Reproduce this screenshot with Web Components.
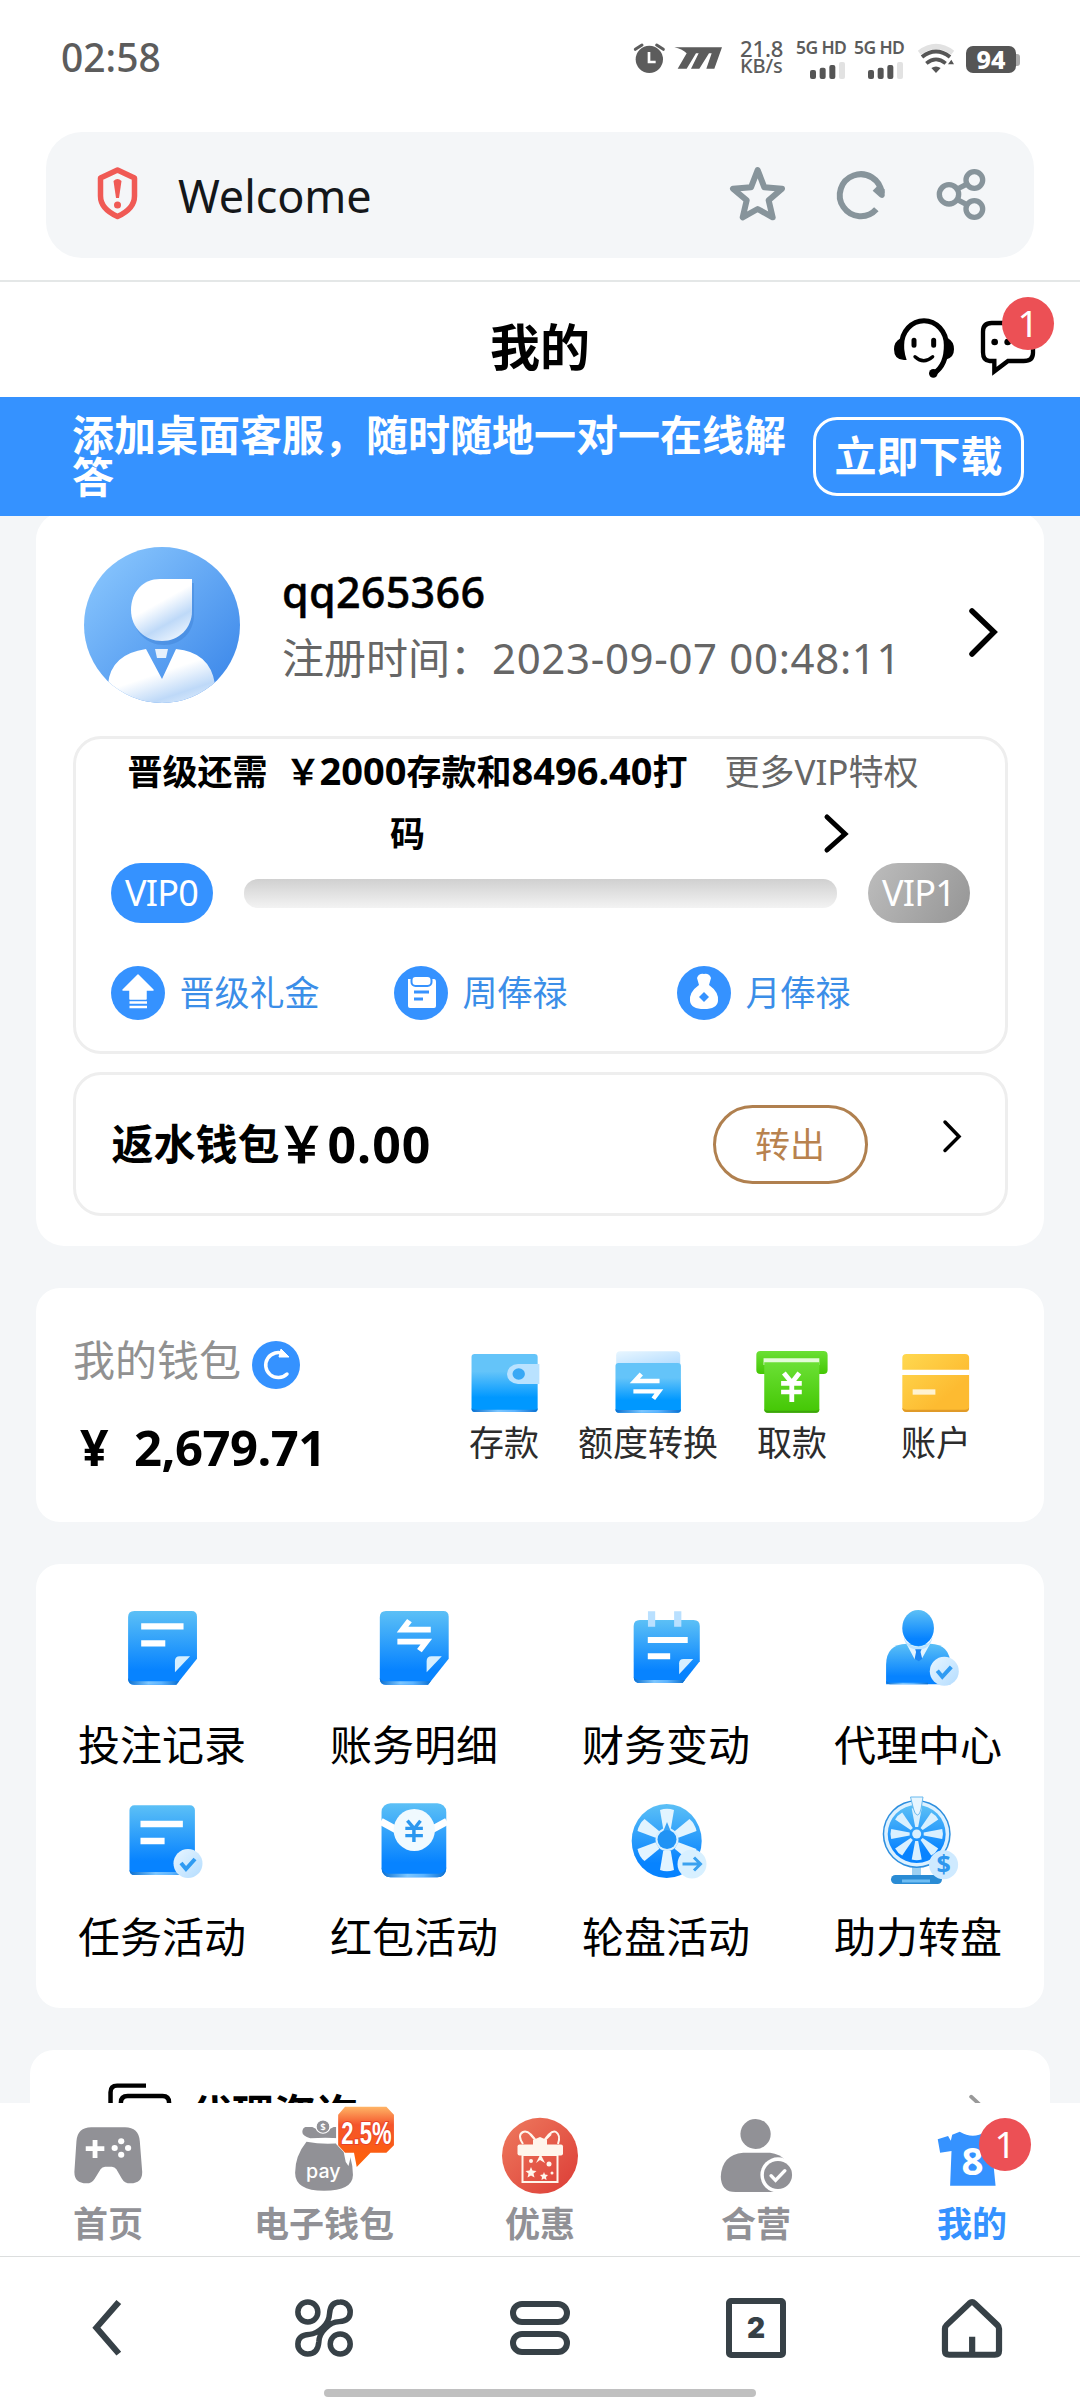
<!DOCTYPE html>
<html lang="zh-CN">
<head>
<meta charset="utf-8">
<title>Welcome</title>
<style>
html,body{margin:0;padding:0;background:#fff}
body{font-family:"Noto Sans","Noto Sans CJK SC",sans-serif;color:#000;width:1080px;height:2400px;overflow:hidden}
</style>
</head>
<body>
<mobile-screen></mobile-screen>
<script>
const defs = `<defs>
<linearGradient id="b" x1="0" y1="0" x2="0" y2="1"><stop offset="0" stop-color="#5cc0f6"/><stop offset=".8" stop-color="#0783ff"/><stop offset="1" stop-color="#0783ff"/></linearGradient>
<linearGradient id="w" x1="0" y1="0" x2="0" y2="1"><stop offset="0" stop-color="#64c4f9"/><stop offset=".3" stop-color="#64c4f9"/><stop offset=".75" stop-color="#0098ff"/></linearGradient>
<linearGradient id="l" x1="0" y1="0" x2="1" y2="1"><stop offset="0" stop-color="#e8f6ff"/><stop offset="1" stop-color="#b3dcff"/></linearGradient>
<linearGradient id="e" x1="0" y1="0" x2="1" y2="0"><stop offset="0" stop-color="#0a6fd0"/><stop offset=".4" stop-color="#7cc6ff"/><stop offset=".65" stop-color="#5db4ff"/><stop offset="1" stop-color="#0a6fd0"/></linearGradient>
<linearGradient id="g" x1="0" y1="0" x2="0" y2="1"><stop offset="0" stop-color="#6be035"/><stop offset="1" stop-color="#44c704"/></linearGradient>
<linearGradient id="y" x1="0" y1="0" x2="1" y2="1"><stop offset="0" stop-color="#ffd84f"/><stop offset=".7" stop-color="#fdbb31"/></linearGradient>
<linearGradient id="a" x1="0" y1="0" x2="1" y2="1"><stop offset="0" stop-color="#8fcbff"/><stop offset="1" stop-color="#3582e8"/></linearGradient>
<linearGradient id="f" x1=".2" y1="0" x2=".75" y2="1"><stop offset=".4" stop-color="#fff"/><stop offset=".72" stop-color="#bed9f8"/><stop offset="1" stop-color="#edf5fe"/></linearGradient>
<linearGradient id="o" x1="0" y1="0" x2="0" y2="1"><stop offset="0" stop-color="#ffb566"/><stop offset=".3" stop-color="#f5552c"/><stop offset="1" stop-color="#ff6205"/></linearGradient>
<linearGradient id="r" x1="0" y1="0" x2="1" y2="1"><stop offset="0" stop-color="#ee7a5e"/><stop offset="1" stop-color="#dc3c36"/></linearGradient>
</defs>`;
/* drawing units of the icon sheets: [x offset, y offset, x scale, y scale] */
const sheet = {
  top:[620,20,1/3,1/3], left:[0,1560,1/2.904,1/3], right:[540,1560,1/2.904,1/3],
  wallet:[450,1340,1/2.904,1/3], footL:[0,2040,1/2.904,1/3], footR:[540,2040,1/2.904,1/3]
};
const on = (s, m) => { const [x,y,a,b] = sheet[s]; return `<g transform="translate(${x} ${y}) scale(${a} ${b})">${m}</g>`; };
const spin = (n, cx, cy, d, fill) => Array.from({length:n}, (_, i) => `<path transform="translate(${cx} ${cy}) rotate(${i*360/n})" d="${d}" fill="${fill}"/>`).join('');
const bars = x => on('top', `<g transform="translate(${x} 0)" fill="#555"><rect x="570" y="138" width="18" height="27" rx="6"/><rect x="599" y="131" width="18" height="34" rx="6"/><rect x="628" y="123" width="18" height="42" rx="6"/><rect x="657" y="114" width="18" height="51" rx="6" fill="#e2e2e2"/></g>`);
const check = (x,y) => `<circle cx="${x}" cy="${y}" r="14.5" fill="url(#l)"/><path d="M${x-7} ${y-.5}l5 6 9-10" fill="none" stroke="#2f9bf2" stroke-width="4"/>`;
const lines = (x,y,w1,w2) => `<path d="M${x} ${y}h${w1}M${x} ${y+51}h${w2}" stroke="#fff" stroke-width="19"/>`;
const fold = (x) => `<path d="M${x+18} 153h166q16 0 16 17v126l-60 78h-122q-18 0-18-18v-185q0-18 18-18z" fill="url(#b)"/><path d="M${x} 358q2 16 18 16h122l8-10h-130q-14 0-18-10z" fill="url(#e)"/><path d="M${x+136} 337v-34q0-14 14-14h30z" fill="#d6efff"/>`;

/* name: [x, y, width, height, markup] */
const icons = {
 alarm:[632,40,36,36,on('top',`<circle cx="88" cy="118" r="41" fill="#5c5c5c"/><path d="M46 88l20-13M130 88l-20-13" stroke="#5c5c5c" stroke-width="9" stroke-linecap="round"/><path d="M87 96v30h20" fill="none" stroke="#fff" stroke-width="8"/>`)],
 moto:[672,40,54,36,on('top',`<path d="M163 82h143l-23 64h-24l16-46h-8l-29 46h-25l23-46h-8l-28 46h-27l27-46q-14-13-37-18z" fill="#5c5c5c"/>`)],
 sig1:[796,54,50,24,bars(0)], sig2:[796,54,50,24,bars(0)],
 wifi:[915,40,42,36,on('top',`<g fill="none"><path d="M898 98Q948 60 998 98" stroke="#e2e2e2" stroke-width="15"/><path d="M906 111Q948 78 990 111" stroke="#555" stroke-width="12"/><path d="M919 130Q948 106 977 130" stroke="#555" stroke-width="11"/></g><path d="M934 144q14-9 28 0l-14 15zM984 133l10-14 8 14z" fill="#555"/>`)],
 shield:[93,165,50,60,`<path d="M117.5 172l17 8v18c0 10-7 16-17 20.500-10-4.500-17-10.500-17-20.500v-18z" fill="none" stroke="#f05a55" stroke-width="5.500" stroke-linejoin="round"/><path d="M113.500 183q4-4 8 0l-2.500 17h-3z" fill="#f05a55"/><circle cx="117.500" cy="207" r="3.500" fill="#f05a55"/>`],
 star:[726,160,66,66,on('top',`<path d="M416 450l20 52 53 4-40 35 12 51-45-25-45 25 12-51-41-35 54-4z" fill="none" stroke="#87949b" stroke-width="18" stroke-linejoin="round"/>`)],
 reload:[831,160,60,66,on('top',`<path d="M769 568A63 63 0 1 1 785 519" fill="none" stroke="#87949b" stroke-width="18"/><path d="M794 508v20q-5 11-15 3l-21-19 17-17z" fill="#87949b"/>`)],
 share:[931,160,60,66,on('top',`<g fill="none" stroke="#87949b" stroke-width="16"><circle cx="987" cy="523" r="29"/><circle cx="1063" cy="480" r="25"/><circle cx="1063" cy="567" r="25"/><path d="M1012 507l27-14M1012 539l27 14"/></g>`)],
 headset:[890,312,68,70,on('top',`<path d="M846 1016Q845 1000 845 975A67 73 0 0 1 979 975Q980 1035 942 1060" fill="none" stroke="#000" stroke-width="15"/><path d="M842 955q-20 10-20 33 0 32 30 32h8q-10-28-10-65zM984 955q18 10 18 33 0 24-22 30-5-20 4-63z"/><circle cx="940" cy="1060" r="13"/><path d="M882 961v15M941 961v15" stroke="#000" stroke-width="15" stroke-linecap="round"/><path d="M885 1010q26 24 53 0" fill="none" stroke="#000" stroke-width="10" stroke-linecap="round"/>`)],
 chat:[976,312,62,70,on('top',`<path d="M1115 909h100q24 0 24 25v64q0 25-28 25h-47l-41 31v-31h-14q-20 0-20-26v-62q0-26 26-26z" fill="none" stroke="#000" stroke-width="13"/><g><circle cx="1124" cy="966" r="10"/><circle cx="1163" cy="966" r="10"/><circle cx="1202" cy="966" r="10"/></g>`)],
 avatar:[84,547,156,156,`<clipPath id="c"><circle cx="162" cy="625" r="78"/></clipPath><circle cx="162" cy="625" r="78" fill="url(#a)"/><path d="M160 581h32v32c0 17-13 30-30 30s-31-13-31-31 12-31 29-31z" fill="#2e70c8" opacity=".3" transform="translate(2 2)"/><path d="M160 579h32v32c0 17-13 30-30 30s-31-13-31-31 12-31 29-31z" fill="url(#f)"/><g clip-path="url(#c)"><path d="M108 684q3-30 38-35l16 30 14-30q34 3 39 35v30H108z" fill="url(#f)"/><path d="M155 649h13l-2 9h-9z" fill="#e6f1fc"/></g>`],
 next:[965,602,38,60,`<path d="M972 611l22 21-22 22" fill="none" stroke="#000" stroke-width="5.500" stroke-linecap="round"/>`],
 more:[820,808,34,48,`<path d="M828 816l18 17-18 16" fill="none" stroke="#000" stroke-width="5" stroke-linecap="round"/>`],
 go:[936,1114,32,44,`<path d="M944 1122l14 14.500-14 14" fill="none" stroke="#000" stroke-width="3.500" stroke-linecap="round"/>`],
 gift1:[111,965,54,54,`<circle cx="138" cy="992" r="27" fill="#3592ff"/><path d="M138 974l15 15h-7v9h-16v-9h-7z" fill="#fff" stroke="#fff" stroke-width="1.500" stroke-linejoin="round"/><path d="M129.500 1001.500h17.500M129.500 1006h17.500" stroke="#fff" stroke-width="2.500"/>`],
 gift2:[394,965,54,54,`<circle cx="421" cy="992" r="27" fill="#3592ff"/><path d="M408 978h26q2 0 2 3v24q0 2-2 2h-24q-2 0-2-2z" fill="#fff"/><rect x="411.500" y="975" width="20" height="10" rx="4" fill="#fff" stroke="#3592ff" stroke-width="2"/><path d="M414 991h15M414 998h9" stroke="#3592ff" stroke-width="3"/>`],
 gift3:[677,965,54,54,`<circle cx="704" cy="992" r="27" fill="#3592ff"/><path d="M699 984l-2-7q2-5 7-4 5-1 7 4l-2 7q10 7 9 16-1 8-14 8t-14-8q-1-9 9-16z" fill="#fff"/><path d="M704 991l5 5-5 5-5-5z" fill="#3592ff"/>`],
 refresh:[252,1341,48,48,`<circle cx="276" cy="1365" r="24" fill="#3592ff"/><path d="M287 1374a12.500 12.500 0 1 1-3-20" fill="none" stroke="#fff" stroke-width="3.500" stroke-linecap="round"/><path d="M281 1349l8 8h-10z" fill="#fff" stroke="#fff"/>`],
 deposit:[464.5,1346,80,72,on('wallet',`<rect x="64" y="42" width="192" height="174" rx="9" fill="url(#w)"/><path d="M64 205q0 11 10 11h172q10 0 10-11-3 5-10 4H74q-8 0-10-4z" fill="url(#e)"/><path d="M199 72h62v60h-62a32 30 0 0 1 0-60z" fill="#b9e2ff"/><ellipse cx="201" cy="102" rx="18" ry="17" fill="#38a8f5"/>`)],
 transfer:[608.5,1346,80,72,on('wallet',`<path d="M484 74V46q0-12 12-12h162q12 0 12 12v28z" fill="url(#l)"/><rect x="482" y="69" width="190" height="149" rx="9" fill="url(#w)"/><path d="M482 207q0 11 10 11h170q10 0 10-11-3 5-10 3H492q-8 0-10-3z" fill="url(#e)"/><path d="M610 123h-72l19-21M534 154h74l-16 22" fill="none" stroke="#fff" stroke-width="13"/>`)],
 withdraw:[752.5,1346,80,72,on('wallet',`<rect x="891" y="33" width="207" height="69" rx="12" fill="url(#g)"/><path d="M912 55h162v20H912z" fill="#e4fbd9"/><path d="M914 67h160v142q0 9-10 9H924q-10 0-10-9z" fill="url(#g)"/><path d="M914 207q1 5 10 5h140q9 0 10-5-1 11-10 11H924q-9 0-10-11z" fill="#3da40b"/><path d="M971 99l23 29 22-29M963 130h60M963 156h60M994 125v61" fill="none" stroke="#fff" stroke-width="14"/>`)],
 account:[896.5,1346,80,72,on('wallet',`<rect x="1315" y="42" width="194" height="174" rx="12" fill="url(#y)"/><path d="M1315 203q2 13 12 13h170q10 0 12-13-3 6-12 6h-170q-9 0-12-6z" fill="#e09a28"/><path d="M1314 97h196" stroke="#fff" stroke-width="16"/><path d="M1345 156h66" stroke="#fff3d2" stroke-width="16"/>`)],
 bets:[112,1590,100,110,on('left',fold(372)+lines(410,199,123,70))],
 ledger:[364,1590,100,110,on('left',fold(1103)+`<path d="M1251 209h-82l20-27M1154 245h84l-20 27" fill="none" stroke="#fff" stroke-width="17"/>`)],
 finance:[616,1590,100,110,on('right',`<path d="M290 180h156q18 0 18 18v106l-50 65H290q-18 0-18-18V198q0-18 18-18z" fill="url(#b)"/><path d="M272 351q2 18 18 18h124l7-9H290q-14 0-18-9z" fill="url(#e)"/><path d="M404 343v-33q0-13 13-13h28z" fill="#d6efff"/><path d="M324 154v46M400 154v46" stroke="#b9e0ff" stroke-width="21"/><path d="M313 240h116M313 289h65" stroke="#fff" stroke-width="18"/>`)],
 agent:[868,1590,100,110,on('right',`<path d="M1005 373v-58q0-63 60-64h68q58 1 59 64v58z" fill="url(#b)"/><path d="M1064 251l24 47 11-22 9 22 26-48-34 10z" fill="#e3f4ff"/><path d="M1088 262h22l-5 14 5 20-10 8-12-8 4-20z" fill="#1a85f2"/><ellipse cx="1098" cy="204" rx="46" ry="54" fill="url(#b)"/><path d="M1056 230q10 30 42 30t42-30q-6 38-42 38t-42-38z" fill="#bce3ff"/><path d="M1005 363q1 10 12 10h110v-5H1017q-8 0-12-5z" fill="url(#e)"/>`)+check(944.3,1671.3)],
 tasks:[112,1782,100,110,on('left',`<rect x="376" y="736" width="190" height="209" rx="14" fill="url(#b)"/><path d="M376 929q1 16 14 16h162q13 0 14-16-2 8-14 7H390q-12 0-14-7z" fill="url(#e)"/>`+lines(408,792,123,70))+check(188,1863.5)],
 redpack:[364,1782,100,110,on('left',`<rect x="1108" y="730" width="188" height="222" rx="26" fill="url(#b)"/><path d="M1108 922q2 30 26 30h136q24 0 26-30-5 21-28 19h-134q-22 2-26-19z" fill="url(#e)"/><path d="M1106 784l60 34M1298 784l-60 34" stroke="#fff" stroke-width="22"/><ellipse cx="1203" cy="810" rx="60" ry="63" fill="#f0faff"/><path d="M1183 782l20 24 18-24M1177 805h51M1177 827h51M1202 804v42" fill="none" stroke="#2b97ef" stroke-width="10"/>`)],
 wheel:[616,1782,100,110,`<ellipse cx="666.700" cy="1841" rx="35" ry="37" fill="url(#b)"/>${spin(6,667,1840,'M-7 -30Q0 -32.500 7 -30L3.800 -11H-3.800Z','#e2f4ff')}<circle cx="667" cy="1839.500" r="11.500" fill="#d8f0ff"/><path d="M667 1822l4 10h-8z" fill="#3ba3f5"/><circle cx="667" cy="1839.500" r="9.500" fill="#2093f5"/><circle cx="692" cy="1864" r="14.500" fill="#d8f0ff"/><path d="M682.500 1864h18m-6.500-6.500l6.500 6.500-6.500 6.500" fill="none" stroke="#3aa1ef" stroke-width="3"/>`],
 fortune:[868,1782,100,110,`<path d="M912 1862h9v15h-9z" fill="#9dd0f2"/><rect x="891" y="1875" width="51" height="9" rx="4.500" fill="#2a8bd4"/><path d="M902 1881h28" stroke="#6fbdf3" stroke-width="3"/><circle cx="916.700" cy="1834" r="34" fill="#2d8fdf"/><circle cx="916.700" cy="1834" r="32.500" fill="#ddf1ff"/><circle cx="916.700" cy="1834" r="29" fill="url(#b)"/>${spin(8,916.7,1834,'M-5 -25.500Q0 -27 5 -25.500L1.500 -7H-1.500Z','#d9f0ff')}<circle cx="916.700" cy="1834" r="4.500" fill="#d9f0ff"/><path d="M910.500 1797h12.500l-2 12q-1 6-3.500 6t-4-6z" fill="#e8f6ff" stroke="#69b9ee"/><circle cx="943.600" cy="1864.700" r="14.500" fill="#cfeaff"/><text x="943.600" y="1873" text-anchor="middle" font-size="25" font-weight="700" fill="#2f97ee">$</text>`],
 copy:[104,2080,72,70,on('footL',`<path d="M424 137h-84q-19 0-19 20v170M351 350v-162q0-20 20-20h101q19 0 19 20v162z" fill="none" stroke="#000" stroke-width="13"/>`)],
 faint:[962,2090,30,50,on('footR',`<path d="M1252 170l44 42-44 42" fill="none" stroke="#999" stroke-width="11" stroke-linecap="round"/>`)],
 home:[68,2103,80,100,on('footL',`<path d="M265 262h98q40 0 43 42l7 92q0 34-34 34-18 0-25-14l-16-28q-5-8-13-8h-20q-8 0-13 8l-17 28q-8 14-24 14-35 0-35-34l6-92q3-42 43-42z" fill="#919196"/><path d="M276 300v54M249 326h54" stroke="#fff" stroke-width="14"/><g fill="#fff"><circle cx="352" cy="304" r="9"/><circle cx="352" cy="344" r="9"/><circle cx="333" cy="324" r="9"/><circle cx="372" cy="324" r="9"/></g>`)],
 ewallet:[244,2103,160,100,on('footL',`<path d="M887 261h20q31 22 62 0h20v34q-44-4-88 0-23-7-23-19 0-12 9-15z" fill="#919196"/><path d="M890 305q52 10 106 3 29 42 29 97-1 47-84 47-84 0-84-54 0-51 33-93z" fill="#919196"/><ellipse cx="938" cy="260" rx="20" ry="20" fill="#919196" stroke="#fff" stroke-width="3"/><text x="938" y="271" text-anchor="middle" font-size="28" font-weight="600" fill="#fff">$</text><path d="M976 250h60v112l-10 14-6-32-8 34-8-12-6-30-22-24z" fill="#fff"/><text x="939" y="415" text-anchor="middle" font-size="57" font-weight="500" fill="#fff" style="font-family:Inter,sans-serif" textLength="100">pay</text><path d="M1002 200h120l22 24v92l-22 22h-46l-40 43-8-43h-26l-20-22v-92z" fill="url(#o)"/><text x="1064" y="311" text-anchor="middle" font-size="96" font-weight="700" fill="#fff" stroke="#e8412a" stroke-width="6" paint-order="stroke" style="font-family:'Liberation Sans',sans-serif" textLength="146" lengthAdjust="spacingAndGlyphs">2.5%</text>`)],
 promo:[490,2103,100,100,`<circle cx="540" cy="2155.800" r="38" fill="url(#r)"/><g fill="none" stroke="#fff5ec" stroke-width="2"><rect x="522.500" y="2155" width="35" height="27"/><path d="M538 2144q-9-15-15-12t0 12M542 2144q9-15 14-12t2 12M538 2143l-8-9M542 2143l9-9"/></g><rect x="517.500" y="2144.500" width="45.500" height="11" rx="2" fill="#fff5ec"/><path d="M533 2140l7-3 7 3v6h-14z" fill="#fff5ec"/><path d="M540 2155l-4 8 4-3 5 3-4-8M531 2167l1.500 3.500 4 .5-3 2.500 1 4-3.500-2-3.500 2 1-4-3-2.500 4-.5zM544 2172l1 2.500 3 .5-2 2 .5 3-2.500-1.500-2.500 1.500.5-3-2-2 3-.5z" fill="#fff5ec"/><g fill="#fff5ec"><circle cx="549" cy="2164" r="2.500"/><circle cx="531" cy="2161" r="2"/><circle cx="552" cy="2173" r="1.500"/></g>`],
 joint:[706,2103,100,100,on('footR',`<ellipse cx="626" cy="282" rx="44" ry="45" fill="#919196"/><path d="M590 338h78q58 8 58 70 0 48-46 48H568q-42 0-43-46 3-66 65-72z" fill="#919196"/><ellipse cx="691" cy="405" rx="51" ry="53" fill="#fff"/><ellipse cx="691" cy="405" rx="41" ry="42" fill="#919196"/><path d="M671 407l13 14 27-29" fill="none" stroke="#fff" stroke-width="10" stroke-linecap="round"/>`)],
 mine:[922,2103,100,100,on('footR',`<path d="M1155 298l30-10 8 14 4-18 22-9q39 24 74 0l22 9 34 14-6 40-30-4 10 103h-132l4-104-33 5z" fill="#3592ff"/><text x="1256" y="406" text-anchor="middle" font-size="112" font-weight="700" fill="#fff" style="font-family:'Noto Sans',sans-serif">8</text>`)],
 back:[72,2290,72,76,on('footL',`<path d="M345 786l-65 77 65 78" fill="none" stroke="#374147" stroke-width="18"/>`)],
 clover:[288,2290,72,76,on('footL',`<g fill="none" stroke="#374147" stroke-width="16"><ellipse cx="894" cy="816" rx="29" ry="30"/><ellipse cx="988" cy="912" rx="29" ry="30"/><path d="M894 942a28 29 0 0 1-29-30q0-27 34-29 19-1 38-20 19-18 20-42 2-35 31-35a28 29 0 0 1 29 30q0 27-32 29-22 1-40 20-18 18-19 40-3 37-32 37z"/></g>`)],
 menu:[504,2290,72,76,`<g fill="none" stroke="#374147" stroke-width="6"><rect x="513" y="2304" width="54" height="18" rx="9"/><rect x="513" y="2334" width="54" height="18" rx="9"/></g>`],
 tabs:[720,2290,72,76,`<rect x="729" y="2301" width="54" height="54" rx="2" fill="none" stroke="#374147" stroke-width="6"/><text x="756" y="2338" text-anchor="middle" font-size="28" font-weight="900" fill="#374147" style="font-family:Inter,sans-serif">2</text>`],
 house:[936,2290,72,76,on('footR',`<path d="M1188 944q-12 0-12-12v-66q0-6 5-11l66-65q8-7 15 0l66 65q5 5 5 11v66q0 12-12 12zM1255 944v-54" fill="none" stroke="#374147" stroke-width="18"/>`)]
};
const def = (tag, css, html) => customElements.define(tag, class extends HTMLElement {
  constructor(){ super(); this.attachShadow({mode:'open'}).innerHTML = `<style>:host{display:block;box-sizing:border-box}*{box-sizing:border-box}${css}</style>` + (typeof html === 'function' ? '' : html); }
  connectedCallback(){ if (typeof html === 'function' && !this.done){ this.done = 1; this.shadowRoot.innerHTML += html(this); } }
});
const ic = n => `<app-icon name="${n}"></app-icon>`;

def('app-icon', ':host{flex:none}svg{display:block}', el => {
  const [x,y,w,h,m] = icons[el.getAttribute('name')];
  return `<svg width="${w}" height="${h}" viewBox="${x} ${y} ${w} ${h}">${defs}${m}</svg>`;
});
def('count-badge', ':host{width:52px;height:53px;border-radius:50%;background:#ec5055;color:#fff;font-size:37px;line-height:52px;text-align:center}', '<slot></slot>');

def('status-bar', `
:host{height:132px;padding:35px 60px 0 61px;color:#5c5c5c;display:flex}
.time{font-size:39px;line-height:44px;font-weight:500;flex:1;white-space:nowrap}
.set{display:flex;height:40px;padding-top:1px}
.net{width:46px;margin:3px 10px 0 14px;font-size:22px;line-height:18px;font-weight:500;letter-spacing:-.1px;white-space:nowrap}
.net div:last-child{font-size:20px;letter-spacing:-.1px}
.cell{width:50px;margin-right:8px}
.cell div{font-size:17.500px;line-height:22px;height:22px;font-weight:600;white-space:nowrap;letter-spacing:-.6px;text-align:center}
.bat{display:flex;align-items:center;margin:9px 0 0 9px;height:29px}
.b{width:50px;height:27px;border-radius:7px;background:#555;color:#fff;font-weight:800;font-size:25px;line-height:27px;text-align:center}
.n{width:4px;height:12px;border-radius:0 3px 3px 0;background:#aaa}
.i{margin-top:4px}`,
`<div class="time">02:58</div><div class="set"><app-icon class="i" name="alarm"></app-icon><app-icon class="i" style="margin-left:4px" name="moto"></app-icon>
<div class="net"><div>21.8</div><div>KB/s</div></div><div class="cell"><div>5G HD</div>${ic('sig1')}</div><div class="cell"><div>5G HD</div>${ic('sig2')}</div>
<app-icon class="i" style="margin-left:3px" name="wifi"></app-icon><div class="bat"><div class="b">94</div><div class="n"></div></div></div>`);

def('address-bar', `
:host{height:150px;padding:0 46px;border-bottom:2px solid #e4e7e7}
.box{height:126px;border-radius:36px;background:#f4f6f8;display:flex;align-items:center;padding:0 43px 0 47px}
.t{flex:1;margin-left:35px;padding-top:2px;font-size:45px;letter-spacing:-.1px;line-height:60px;color:#14171a}
app-icon{margin-top:-4px}.g{display:flex;gap:40px}`,
`<div class="box">${ic('shield')}<div class="t">Welcome</div><div class="g">${ic('star')}${ic('reload')}${ic('share')}</div></div>`);

def('page-header', `
:host{height:115px;display:flex;align-items:center}
.s{width:300px}.t{flex:1;text-align:center;font-size:50px;font-weight:700;line-height:60px;padding-top:14px}
.r{width:300px;display:flex;gap:18px;justify-content:flex-end;padding:15px 42px 0 0;position:relative}
count-badge{position:absolute;right:26px;top:0}`,
`<div class="s"></div><div class="t">我的</div><div class="r">${ic('headset')}${ic('chat')}<count-badge>1</count-badge></div>`);

def('promo-banner', `
:host{height:119px;background:#3592ff;color:#fff;display:flex;justify-content:space-between;align-items:flex-start;padding:0 56px 0 72px;font-weight:700;font-size:42px}
.t{width:724px;line-height:42px;padding-top:17px;word-break:break-all}
.b{width:211px;height:79px;margin-top:20px;border:3px solid #fff;border-radius:24px;line-height:72px;text-align:center}`,
`<div class="t">添加桌面客服，随时随地一对一在线解答</div><div class="b">立即下载</div>`);

def('user-row', `
:host{height:224px;padding:35px 41px 0 48px;display:flex}
.m{flex:1;padding:18px 0 0 42px}
.n{font-size:43px;font-weight:500;line-height:54px;letter-spacing:.3px;-webkit-text-stroke:.5px #000}
.d{font-size:42px;line-height:60px;color:#666;white-space:nowrap;margin-top:9px}
.d span{letter-spacing:.65px}
.c{margin-top:55px}`,
`${ic('avatar')}<div class="m"><div class="n">qq265366</div><div class="d">注册时间：<span>2023-09-07 00:48:11</span></div></div><app-icon class="c" name="next"></app-icon>`);

def('pay-link', ':host{display:flex;width:283px;align-items:center;font-size:35px;line-height:54px;color:#3b8ee8;gap:15px}', el => ic(el.getAttribute('icon')) + '<slot></slot>');

def('vip-panel', `
:host{height:318px;margin:0 36.500px;border:3px solid #eee;border-radius:28px;padding:2px 35px 0}
.top{display:flex;font-size:35px;line-height:62px;height:122px;text-align:center}
.need{width:594px;font-weight:700;white-space:nowrap}
.need span{font-size:38px;line-height:1}.need i{font-style:normal;margin-left:9px;margin-right:-1px}
.more{width:234px;color:#666;display:flex;flex-direction:column;align-items:center;white-space:nowrap}
.more app-icon{margin:6px 0 0 28px}
.lv{display:flex;align-items:center;justify-content:space-between;height:60px}
.p{width:102px;height:60px;border-radius:30px;background:#3592ff;color:#fff;font-size:36px;line-height:59px;text-align:center;letter-spacing:-.8px}
.p.g{background:linear-gradient(120deg,#bdbdbd,#959595)}
.bar{width:593px;height:29px;border-radius:14px;background:linear-gradient(#d0d0d0,#f3f3f3)}
.gifts{display:flex;margin-top:43px}`,
`<div class="top"><div class="need">晋级还需 <i>￥</i><span>2000</span>存款和<span>8496.40</span>打<br>码</div><div class="more"><div>更多VIP特权</div>${ic('more')}</div></div>
<div class="lv"><div class="p">VIP0</div><div class="bar"></div><div class="p g">VIP1</div></div>
<div class="gifts"><pay-link icon="gift1">晋级礼金</pay-link><pay-link icon="gift2">周俸禄</pay-link><pay-link icon="gift3">月俸禄</pay-link></div>`);

def('rebate-box', `
:host{height:144px;margin:18px 36.500px 0;border:3px solid #eee;border-radius:28px;display:flex;padding:30px 36px 0 36px}
.t{flex:1;display:flex;font-size:42px;font-weight:700;line-height:78px}.t b{font-weight:700;font-size:50px;letter-spacing:1px;white-space:nowrap;margin-left:-3px}
.b{width:155px;height:79px;border:3px solid #b0804f;border-radius:40px;color:#b8824e;font-size:35px;line-height:73px;text-align:center;margin-right:69px}
app-icon{margin-top:9px}`,
`<div class="t">返水钱包<b>￥0.00</b></div><div class="b">转出</div>${ic('go')}`);

def('wallet-action', ':host{width:144px;display:flex;flex-direction:column;align-items:center;font-size:35px;line-height:48px;color:#2c2c2c;white-space:nowrap}.l{margin-top:1px}', el => ic(el.getAttribute('icon')) + '<div class="l"><slot></slot></div>');

def('wallet-card', `
:host{height:234px;margin:42px 36px 0;background:#fff;border-radius:24px;display:flex}
.m{width:396px;padding:42px 0 0 37px}
.h{display:flex;gap:11px;align-items:center;font-size:42px;line-height:60px;color:#919191}
.h app-icon{margin-top:10px}
.a{font-size:49px;line-height:66px;font-weight:700;margin-top:24px;display:flex;letter-spacing:-.5px}
.a i{font-style:normal;width:61px;padding-left:7px;font-size:50px}
.r{display:flex;padding-top:58px}`,
`<div class="m"><div class="h">我的钱包${ic('refresh')}</div><div class="a"><i>¥</i>2,679.71</div></div><div class="r"><wallet-action icon="deposit">存款</wallet-action><wallet-action icon="transfer">额度转换</wallet-action><wallet-action icon="withdraw">取款</wallet-action><wallet-action icon="account">账户</wallet-action></div>`);

def('menu-item', ':host{width:252px;height:192px;display:flex;flex-direction:column;align-items:center;font-size:42px;line-height:60px}.l{margin-top:15px}', el => ic(el.getAttribute('icon')) + '<div class="l"><slot></slot></div>');

def('menu-card', ':host{height:444px;margin:42px 36px 0;padding-top:26px;background:#fff;border-radius:24px;display:flex;flex-wrap:wrap;align-content:flex-start}',
 [['bets','投注记录'],['ledger','账务明细'],['finance','财务变动'],['agent','代理中心'],['tasks','任务活动'],['redpack','红包活动'],['wheel','轮盘活动'],['fortune','助力转盘']].map(([i,t]) => `<menu-item icon="${i}">${t}</menu-item>`).join(''));

def('advice-card', `
:host{height:180px;margin:42px 30px 0;background:#fff;border-radius:24px;display:flex;padding:30px 58px 0 74px}
.t{flex:1;font-size:42px;font-weight:700;line-height:60px;margin:4px 0 0 14px}
app-icon:last-child{margin-top:10px}`,
`${ic('copy')}<div class="t">代理咨询</div>${ic('faint')}`);

def('account-view', `
:host{height:1587px;overflow:hidden;background:#f4f6f8;display:flex;flex-direction:column}
.card{height:734px;margin:-4px 36px 0;background:#fff;border-radius:28px}
.clip{overflow:hidden;flex:none}
wallet-card,menu-card,advice-card{flex:none}`,
`<div class="clip"><div class="card"><user-row></user-row><vip-panel></vip-panel><rebate-box></rebate-box></div></div><wallet-card></wallet-card><menu-card></menu-card><advice-card></advice-card>`);

def('tab-item', `
:host{width:216px;display:flex;flex-direction:column;align-items:center;position:relative;font-size:35px;line-height:46px;font-weight:700;color:#919196}
:host([active]){color:#3592ff}
.l{margin-top:-2px}
::slotted(count-badge){position:absolute;left:115px;top:15px;font-weight:400}`,
 el => ic(el.getAttribute('icon')) + '<div class="l"><slot></slot></div><slot name="badge"></slot>');
def('tab-bar', ':host{height:154px;display:flex;background:#fff;border-bottom:1px solid #dcdede}',
`<tab-item icon="home">首页</tab-item><tab-item icon="ewallet">电子钱包</tab-item><tab-item icon="promo">优惠</tab-item><tab-item icon="joint">合营</tab-item><tab-item icon="mine" active>我的<count-badge slot="badge">1</count-badge></tab-item>`);

def('browser-nav', `
:host{height:143px;background:#fff;display:flex;flex-direction:column;align-items:center}
.r{display:flex;width:1080px;justify-content:space-around;padding-top:33px}
.h{width:432px;height:8px;border-radius:4px;background:#c0c0c0;margin-top:23px}`,
`<div class="r">${['back','clover','menu','tabs','house'].map(ic).join('')}</div><div class="h"></div>`);

def('mobile-screen', ':host{width:1080px;height:2400px;overflow:hidden;background:#fff}',
`<status-bar></status-bar><address-bar></address-bar><page-header></page-header><promo-banner></promo-banner><account-view></account-view><tab-bar></tab-bar><browser-nav></browser-nav>`);
</script>
</body>
</html>
